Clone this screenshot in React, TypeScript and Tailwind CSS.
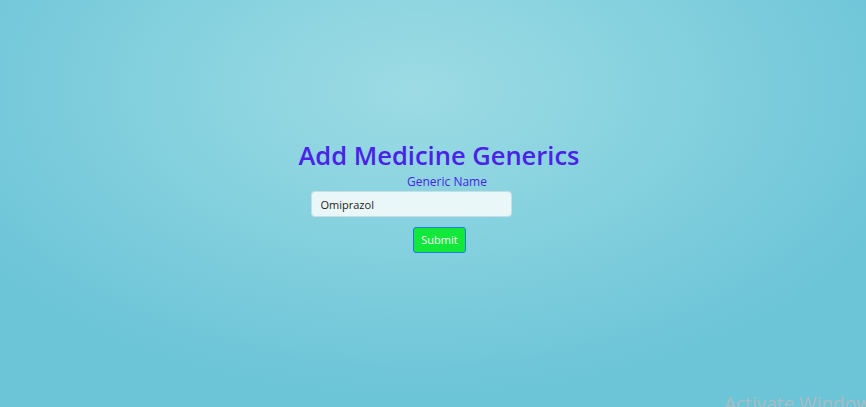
export default function App() {
  return (
    <div
      className="relative flex h-[407px] w-full flex-col items-center overflow-hidden bg-[radial-gradient(ellipse_60%_75%_at_48%_22%,#9cdbe4_0%,#87d2df_45%,#6cc4d7_100%)] pt-[137px]"
      style={{ fontFamily: '"Open Sans", "Noto Sans", sans-serif' }}
    >
      <h1 className="ml-[12px] text-[25.5px] font-semibold leading-[37px] text-[#4a22e8]">
        Add Medicine Generics
      </h1>
      <label className="ml-[28px] mt-[1px] text-[12px] leading-[14px] text-[#4a22e8]">
        Generic Name
      </label>
      <input
        type="text"
        defaultValue="Omiprazol"
        className="mr-[44px] mt-[2px] h-[26px] w-[201px] rounded-[4px] border border-[#c6dfe5] bg-[#eaf7f9] px-[9px] text-[11px] text-[#222] outline-none"
      />
      <button
        type="button"
        className="ml-[13px] mt-[10px] h-[26px] w-[53px] rounded-[3px] border border-[#1b7fe0] bg-[#12e83a] text-[11px] text-white"
      >
        Submit
      </button>
      <span className="absolute left-[724px] top-[391px] whitespace-nowrap text-[19px] leading-[24px] text-[#a9bcc3]">
        Activate Windows
      </span>
    </div>
  );
}
